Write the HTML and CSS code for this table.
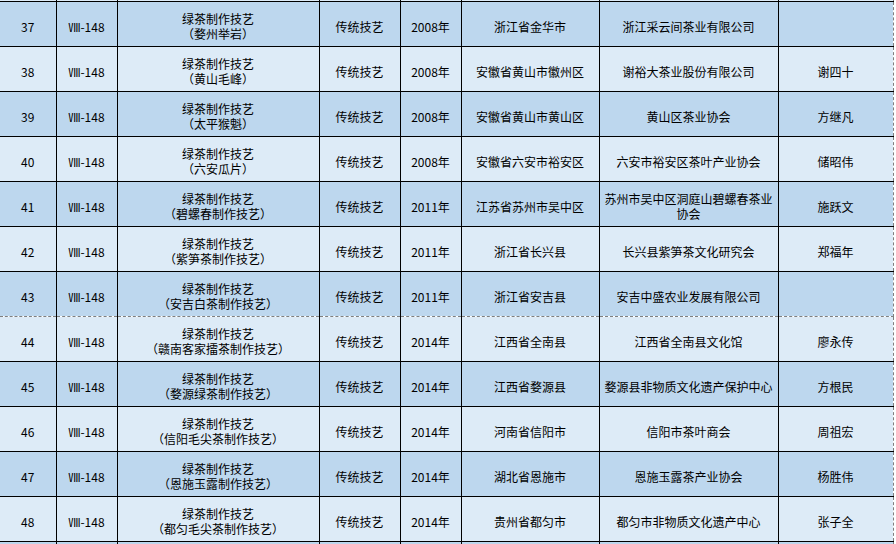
FILE: index.html
```html
<!DOCTYPE html>
<html lang="zh-CN">
<head>
<meta charset="utf-8">
<title>国家级非物质文化遗产代表性项目名录 - 绿茶制作技艺</title>
<link rel="stylesheet" href="styles.css">
</head>
<body>
<div class="sheet-wrap">
<table class="sheet">
  <colgroup>
    <col class="w-no">
    <col class="w-code">
    <col class="w-name">
    <col class="w-cat">
    <col class="w-year">
    <col class="w-area">
    <col class="w-unit">
    <col class="w-person">
  </colgroup>
  <tbody>
    <tr class="light stub"><td></td><td></td><td></td><td></td><td></td><td></td><td></td><td></td></tr>
    <tr class="dark">
      <td>37</td><td>Ⅷ-148</td><td>绿茶制作技艺<br>（婺州举岩）</td><td>传统技艺</td><td>2008年</td><td>浙江省金华市</td><td>浙江采云间茶业有限公司</td><td></td>
    </tr>
    <tr class="light">
      <td>38</td><td>Ⅷ-148</td><td>绿茶制作技艺<br>（黄山毛峰）</td><td>传统技艺</td><td>2008年</td><td>安徽省黄山市徽州区</td><td>谢裕大茶业股份有限公司</td><td>谢四十</td>
    </tr>
    <tr class="dark">
      <td>39</td><td>Ⅷ-148</td><td>绿茶制作技艺<br>（太平猴魁）</td><td>传统技艺</td><td>2008年</td><td>安徽省黄山市黄山区</td><td>黄山区茶业协会</td><td>方继凡</td>
    </tr>
    <tr class="light">
      <td>40</td><td>Ⅷ-148</td><td>绿茶制作技艺<br>（六安瓜片）</td><td>传统技艺</td><td>2008年</td><td>安徽省六安市裕安区</td><td>六安市裕安区茶叶产业协会</td><td>储昭伟</td>
    </tr>
    <tr class="dark">
      <td>41</td><td>Ⅷ-148</td><td>绿茶制作技艺<br>（碧螺春制作技艺）</td><td>传统技艺</td><td>2011年</td><td>江苏省苏州市吴中区</td><td>苏州市吴中区洞庭山碧螺春茶业<br>协会</td><td>施跃文</td>
    </tr>
    <tr class="light">
      <td>42</td><td>Ⅷ-148</td><td>绿茶制作技艺<br>（紫笋茶制作技艺）</td><td>传统技艺</td><td>2011年</td><td>浙江省长兴县</td><td>长兴县紫笋茶文化研究会</td><td>郑福年</td>
    </tr>
    <tr class="dark break-before">
      <td>43</td><td>Ⅷ-148</td><td>绿茶制作技艺<br>（安吉白茶制作技艺）</td><td>传统技艺</td><td>2011年</td><td>浙江省安吉县</td><td>安吉中盛农业发展有限公司</td><td></td>
    </tr>
    <tr class="light break-after">
      <td>44</td><td>Ⅷ-148</td><td>绿茶制作技艺<br>（赣南客家擂茶制作技艺）</td><td>传统技艺</td><td>2014年</td><td>江西省全南县</td><td>江西省全南县文化馆</td><td>廖永传</td>
    </tr>
    <tr class="dark">
      <td>45</td><td>Ⅷ-148</td><td>绿茶制作技艺<br>（婺源绿茶制作技艺）</td><td>传统技艺</td><td>2014年</td><td>江西省婺源县</td><td>婺源县非物质文化遗产保护中心</td><td>方根民</td>
    </tr>
    <tr class="light">
      <td>46</td><td>Ⅷ-148</td><td>绿茶制作技艺<br>（信阳毛尖茶制作技艺）</td><td>传统技艺</td><td>2014年</td><td>河南省信阳市</td><td>信阳市茶叶商会</td><td>周祖宏</td>
    </tr>
    <tr class="dark">
      <td>47</td><td>Ⅷ-148</td><td>绿茶制作技艺<br>（恩施玉露制作技艺）</td><td>传统技艺</td><td>2014年</td><td>湖北省恩施市</td><td>恩施玉露茶产业协会</td><td>杨胜伟</td>
    </tr>
    <tr class="light">
      <td>48</td><td>Ⅷ-148</td><td>绿茶制作技艺<br>（都匀毛尖茶制作技艺）</td><td>传统技艺</td><td>2014年</td><td>贵州省都匀市</td><td>都匀市非物质文化遗产中心</td><td>张子全</td>
    </tr>
    <tr class="dark stub"><td></td><td></td><td></td><td></td><td></td><td></td><td></td><td></td></tr>
  </tbody>
</table>
</div>
</body>
</html>
```

FILE: styles.css
```css
html, body {
  margin: 0;
  padding: 0;
  background: #ffffff;
  overflow: hidden;
}

body {
  width: 896px;
  height: 544px;
  font-family: "Noto Sans CJK SC", "Liberation Sans", sans-serif;
  font-size: 12px;
  color: #000000;
}

.sheet-wrap {
  margin-top: -44px;
  height: 588px;
  overflow: hidden;
}

.sheet {
  border-collapse: collapse;
  table-layout: fixed;
  width: 893px;
}

.w-no { width: 56px; }
.w-code { width: 61px; }
.w-name { width: 202px; }
.w-cat { width: 81px; }
.w-year { width: 61px; }
.w-area { width: 138px; }
.w-unit { width: 179px; }
.w-person { width: 115px; }

.sheet tr {
  height: 45px;
}

.sheet td {
  border: 1px solid #000000;
  padding: 4px 2px 0;
  text-align: center;
  vertical-align: middle;
  line-height: 15px;
  white-space: nowrap;
  overflow: hidden;
}

.sheet td:first-child {
  border-left: none;
}

.sheet td:last-child {
  border-right: 1px dashed #7f7f7f;
}

.dark td {
  background: #bdd7ee;
}

.light td {
  background: #ddebf7;
}

.break-before td {
  border-bottom: 1px dashed #7f7f7f;
}

.break-after td {
  border-top: 1px dashed #7f7f7f;
}
```
